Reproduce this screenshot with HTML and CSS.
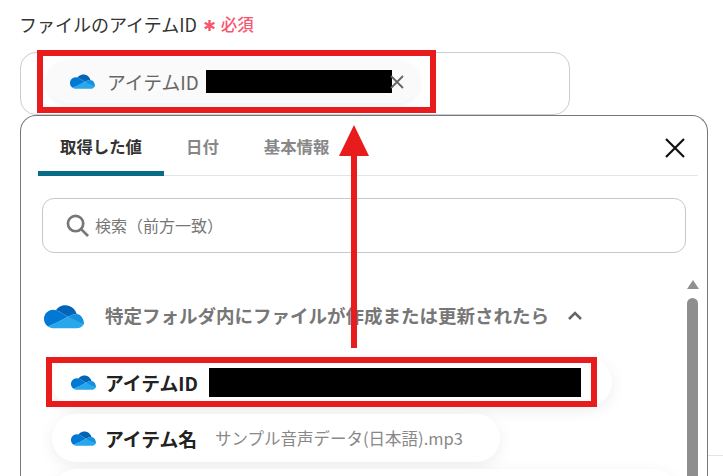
FILE: index.html
```html
<!DOCTYPE html>
<html lang="ja">
<head>
    <meta charset="UTF-8">
    <title>ファイルのアイテムID</title>
    <link rel="stylesheet" href="styles.css">
</head>
<body>
    <svg class="icon-defs" width="0" height="0">
        <symbol id="onedrive" viewBox="0 0 40 27">
            <path fill="#0364b8" d="M15.2 8.500 24 13.800l5.300-2.200c1.100-.5 2.200-.7 3.400-.7-1.600-6.200-7.900-10-14.100-8.400-2.800.7-5.200 2.400-6.800 4.800z"/>
            <path fill="#0078d4" d="M15.200 8.500A11.600 11.600 0 0 0 9 6.700h-.1C4 6.800 0 10.900 0 15.900c0 3.100 1.500 5.800 4 7.500l9.700-4.100 10.300-5.500z"/>
            <path fill="#1490df" d="M32.700 10.900h-.1c-1.200 0-2.300.2-3.300.7L24 13.800l6 7.400 10-.3c0-5.500-3.500-10-7.300-10z"/>
            <path fill="#28a8ea" d="M4 23.400C5.700 24.600 7.800 25.200 9 25.200h23.700c3 0 5.800-1.700 7.300-4.300L24 13.800z"/>
        </symbol>
    </svg>

    <main class="page">
        <div class="field-label">
            ファイルのアイテムID
            <svg class="star" viewBox="0 0 14 14"><path d="M7 1v12M1.800 4l10.400 6M12.200 4L1.800 10"/></svg>
            <span class="required">必須</span>
        </div>

        <div class="field-box">
            <div class="chip">
                <svg class="cloud-small"><use href="#onedrive"/></svg>
                <span class="chip-name">アイテムID</span>
                <span class="mask mask-chip"></span>
                <svg class="chip-close" viewBox="0 0 14 14"><path d="M1 1l12 12M13 1L1 13"/></svg>
            </div>
        </div>

        <section class="panel">
            <div class="tabs">
                <div class="tab active">取得した値</div>
                <div class="tab tab-date">日付</div>
                <div class="tab tab-info">基本情報</div>
                <svg class="panel-close" viewBox="0 0 20 20"><path d="M1 1l18 18M19 1L1 19"/></svg>
            </div>

            <div class="search">
                <svg class="search-icon" viewBox="0 0 24 24"><circle cx="10" cy="10" r="8"/><path d="M16 16l7 7"/></svg>
                <span>検索（前方一致）</span>
            </div>

            <div class="results">
                <div class="results-list">
                    <div class="group-head">
                        <svg class="cloud-large"><use href="#onedrive"/></svg>
                        <span class="group-title">特定フォルダ内にファイルが作成または更新されたら</span>
                        <svg class="chevron" viewBox="0 0 16 10"><path d="M2 8l6-6 6 6"/></svg>
                    </div>
                    <div class="item item-first">
                        <svg class="cloud-small"><use href="#onedrive"/></svg>
                        <span class="item-name">アイテムID</span>
                        <span class="mask mask-item"></span>
                    </div>
                    <div class="item item-second">
                        <svg class="cloud-small"><use href="#onedrive"/></svg>
                        <span class="item-name">アイテム名</span>
                        <span class="item-value">サンプル音声データ(日本語).mp3</span>
                    </div>
                    <div class="item item-third"></div>
                </div>
                <div class="scrollbar">
                    <div class="scroll-arrow"></div>
                    <div class="scroll-thumb"></div>
                </div>
            </div>
        </section>

        <div class="side-line"></div>

        <!-- annotations drawn over the screenshot -->
        <div class="red-box red-box-top"></div>
        <div class="red-box red-box-item"></div>
        <div class="arrow-shaft"></div>
        <div class="arrow-head"></div>
    </main>
</body>
</html>
```

FILE: styles.css
```css
* { margin: 0; padding: 0; box-sizing: border-box; }
html, body { height: 476px; overflow: hidden; }
body {
    font-family: "Noto Sans CJK JP", "Noto Sans", sans-serif;
    background: #fff;
    color: #333;
    text-spacing-trim: space-all;
}
.icon-defs { position: absolute; }
.page {
    position: relative;
    height: 476px;
    padding: 12px 15px 0 20px;
    overflow: hidden;
}
.field-label {
    display: flex;
    align-items: center;
    font-size: 18px;
    line-height: 25px;
    height: 25px;
    margin-bottom: 15px;
    margin-left: -1px;
    color: #333;
}
.star { width: 13px; height: 13px; margin: 2px 0 0 6px; fill: none; stroke: #f6566e; stroke-width: 2.6; }
.required { margin-left: 5px; color: #f6566e; font-size: 16.500px; font-weight: 500; }

.field-box {
    width: 550px;
    height: 63px;
    border: 1px solid #c9ced6;
    border-radius: 16px;
    padding: 7px 0 0 26px;
}
.chip {
    display: flex;
    align-items: center;
    width: 372px;
    height: 43px;
    padding-left: 23px;
    border-radius: 22px;
    background: #fafafa;
    box-shadow: 0 2px 6px rgba(0, 0, 0, 0.06);
    font-size: 18.800px;
    color: #666;
}
.cloud-small { width: 25px; height: 17px; flex: none; }
.chip-name { margin-left: 12px; margin-top: -1px; }
.mask { display: block; background: #000; flex: none; }
.mask-chip { width: 186px; height: 23px; margin-left: 7px; margin-top: -1px; }
.chip-close { width: 14px; height: 14px; margin-left: -2px; flex: none; fill: none; stroke: #666; stroke-width: 1.8; }

.panel {
    width: 688px;
    height: 400px;
    padding: 0 9px 0 17px;
    border: 1px solid #777;
    border-bottom: none;
    border-radius: 16px 16px 0 0;
    background: #fff;
}
.tabs {
    display: flex;
    height: 60px;
    align-items: flex-start;
    border-bottom: 1px solid #e2e4e8;
}
.tab {
    height: 60px;
    padding-top: 19px;
    font-size: 16.400px;
    line-height: 22px;
    font-weight: 700;
    color: #888;
}
.tab-date { margin-left: 22px; }
.tab-info { margin-left: 45px; }
.tab.active {
    width: 126px;
    text-align: center;
    color: #333;
    border-bottom: 5px solid #086c86;
    border-radius: 4px 4px 0 0;
}
.panel-close {
    width: 20px;
    height: 20px;
    margin: 22px 13px 0 auto;
    fill: none;
    stroke: #111;
    stroke-width: 2.2;
}

.search {
    display: flex;
    align-items: center;
    width: 644px;
    height: 55px;
    margin: 22px 0 0 4px;
    padding-left: 23px;
    border: 1px solid #c6c8cc;
    border-radius: 12px;
    font-size: 16px;
    line-height: 20px;
    color: #777;
}
.search span { margin-top: -2px; }
.search-icon { width: 23px; height: 23px; margin-right: 6px; fill: none; stroke: #777; stroke-width: 2.8; }

.results { display: flex; margin-top: 23px; }
.results-list { width: 649px; flex: none; }
.group-head {
    display: flex;
    align-items: center;
    height: 58px;
    margin: 11px 0 0 6px;
}
.cloud-large { width: 40px; height: 27px; flex: none; }
.group-title {
    margin-left: 21px;
    margin-top: -3px;
    font-size: 18.500px;
    font-weight: 700;
    color: #777;
}
.chevron { width: 16px; height: 10px; margin-left: 18px; fill: none; stroke: #666; stroke-width: 2.6; }

.item {
    display: flex;
    align-items: center;
    height: 48px;
    margin: 0 0 8px 14px;
    padding-left: 19px;
    border-radius: 24px;
    background: #fff;
    box-shadow: 0 4px 16px rgba(0, 0, 0, 0.07);
}
.item-first { width: 560px; margin-top: 13px; }
.item-second { width: 448px; }
.item-third { width: 626px; margin-top: -1px; }
.item-name { margin-left: 9px; font-size: 18.800px; font-weight: 700; color: #222; }
.mask-item { width: 372px; height: 29px; margin-left: 11px; }
.item-value { margin-left: 18px; font-size: 16.500px; color: #888; }

.scrollbar { width: 11px; display: flex; flex-direction: column; align-items: center; }
.scroll-arrow {
    width: 0;
    height: 0;
    margin-top: 4px;
    border-left: 6px solid transparent;
    border-right: 6px solid transparent;
    border-bottom: 9px solid #909090;
}
.scroll-thumb { width: 11px; height: 300px; margin-top: 9px; background: #8e8e8e; border-radius: 6px 6px 0 0; }

.side-line { position: absolute; left: 708px; top: 455px; width: 15px; height: 1px; background: #e4e4e4; }

.red-box { position: absolute; border: 6px solid #e81c1c; }
.red-box-top { left: 37px; top: 50px; width: 399px; height: 63px; }
.red-box-item { left: 46px; top: 357px; width: 551px; height: 50px; }
.arrow-shaft { position: absolute; left: 351px; top: 150px; width: 6px; height: 198px; background: #e81c1c; }
.arrow-head {
    position: absolute;
    left: 339px;
    top: 125px;
    width: 0;
    height: 0;
    border-left: 15.500px solid transparent;
    border-right: 15.500px solid transparent;
    border-bottom: 31px solid #e81c1c;
}
```
